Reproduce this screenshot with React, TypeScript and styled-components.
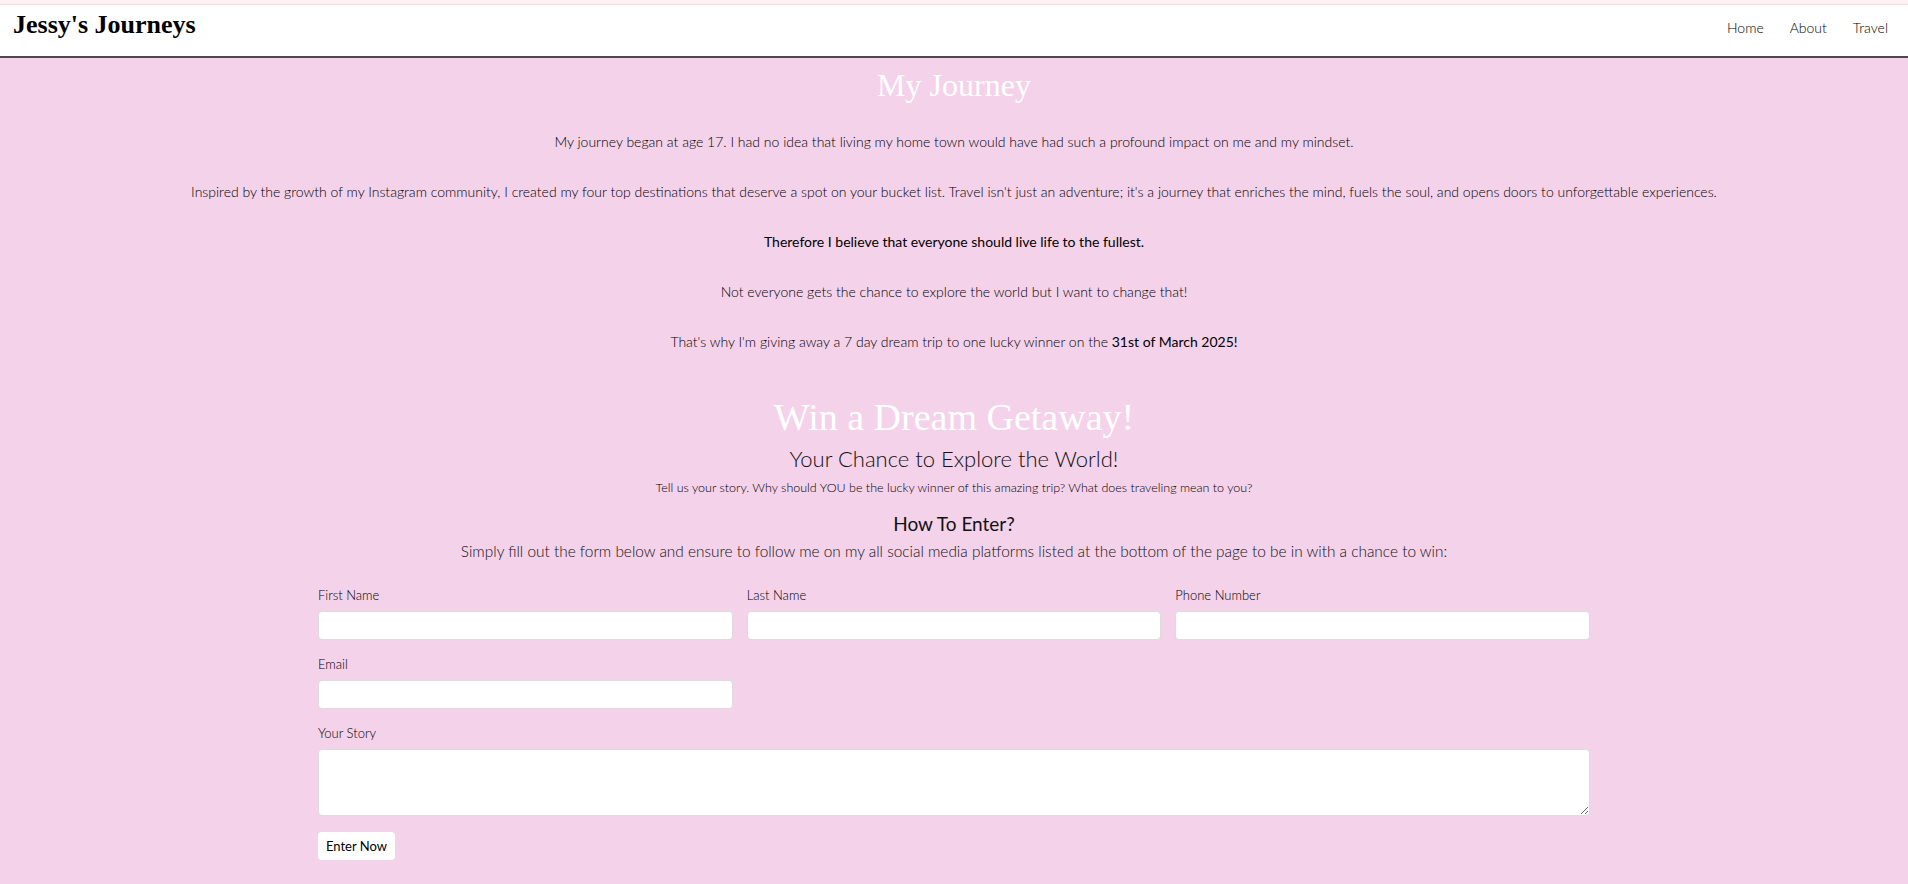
import React from "react";
import styled, { createGlobalStyle } from "styled-components";

const GlobalStyle = createGlobalStyle`
  html, body { margin: 0; padding: 0; scrollbar-width: none; }
  html::-webkit-scrollbar, body::-webkit-scrollbar { display: none; }
  body {
    background: #f4d2ea;
    font-family: Lato, "Open Sans", Arial, sans-serif;
    color: #000;
  }
  * { box-sizing: border-box; }
`;

const TopStrip = styled.div`
  height: 5px;
  background: #fdf1f1;
  border-bottom: 1px solid #f6dede;
`;

const Header = styled.header`
  display: flex;
  align-items: baseline;
  justify-content: space-between;
  height: 53px;
  padding: 5px 20px 0 13px;
  background: #fff;
  border-bottom: 2px solid #4a4a4a;
`;

const Logo = styled.div`
  font-family: "Liberation Serif", "Times New Roman", serif;
  font-weight: 700;
  font-size: 26px;
  color: #000;
`;

const Nav = styled.nav`
  display: flex;
  gap: 26px;
`;

const NavLink = styled.a`
  font-size: 14px;
  font-weight: 300;
  color: #000;
  text-decoration: none;
`;

const Main = styled.main`
  display: flex;
  flex-direction: column;
  align-items: center;
  text-align: center;
  padding-bottom: 60px;
`;

const Title = styled.h1<{ $size: number; $top: number }>`
  margin: ${(p) => p.$top}px 0 0;
  font-family: "Liberation Serif", "Times New Roman", serif;
  font-weight: 400;
  font-size: ${(p) => p.$size}px;
  line-height: ${(p) => Math.round(p.$size * 1.16)}px;
  color: #fff;
`;

const Story = styled.section`
  display: flex;
  flex-direction: column;
  gap: 30px;
  margin-top: 28px;
`;

const Para = styled.p<{ $strong?: boolean }>`
  margin: 0;
  font-size: 14px;
  line-height: 20px;
  font-weight: ${(p) => (p.$strong ? 400 : 300)};
  color: #000;
`;

const Em = styled.span`
  font-weight: 400;
  color: #000;
`;

const Subtitle = styled.h2`
  margin: 6px 0 0;
  font-size: 22px;
  line-height: 28px;
  font-weight: 300;
  color: #111;
`;

const Small = styled.p`
  margin: 6px 0 0;
  font-size: 12.5px;
  line-height: 18px;
  font-weight: 300;
  color: #000;
`;

const HowTo = styled.h3`
  margin: 15px 0 0;
  font-size: 19px;
  line-height: 24px;
  font-weight: 400;
  color: #111;
`;

const Lead = styled.p`
  margin: 5px 0 0;
  font-size: 15.4px;
  line-height: 20px;
  font-weight: 300;
  color: #111;
`;

const Form = styled.form`
  display: grid;
  grid-template-columns: repeat(3, 1fr);
  column-gap: 14px;
  row-gap: 16px;
  width: 1272px;
  margin-top: 26px;
  text-align: left;
`;

const Field = styled.label<{ $full?: boolean }>`
  display: flex;
  flex-direction: column;
  gap: 7px;
  grid-column: ${(p) => (p.$full ? "1 / -1" : "auto")};
`;

const LabelText = styled.span`
  font-size: 13px;
  line-height: 17px;
  font-weight: 300;
  color: #000;
`;

const Input = styled.input`
  height: 29px;
  border: 1px solid #dcdcdc;
  border-radius: 4px;
  background: #fff;
  font-family: inherit;
`;

const TextArea = styled.textarea`
  height: 67px;
  border: 1px solid #dcdcdc;
  border-radius: 4px;
  background: #fff;
  font-family: inherit;
  resize: vertical;
`;

const ButtonRow = styled.div`
  grid-column: 1 / -1;
`;

const Button = styled.button`
  height: 28px;
  padding: 0 8px;
  border: none;
  border-radius: 4px;
  background: #fff;
  font-family: Lato, Arial, sans-serif;
  font-size: 13px;
  font-weight: 400;
  color: #000;
`;

export default function App() {
  return (
    <>
      <GlobalStyle />
      <TopStrip />
      <Header>
        <Logo>Jessy's Journeys</Logo>
        <Nav>
          <NavLink href="#">Home</NavLink>
          <NavLink href="#">About</NavLink>
          <NavLink href="#">Travel</NavLink>
        </Nav>
      </Header>
      <Main>
        <Title $size={32} $top={9}>My Journey</Title>
        <Story>
          <Para>
            My journey began at age 17. I had no idea that living my home town would have had such a profound impact on me and my mindset.
          </Para>
          <Para>
            Inspired by the growth of my Instagram community, I created my four top destinations that deserve a spot on your bucket list. Travel isn't just an adventure; it's a journey that enriches the mind, fuels the soul, and opens doors to unforgettable experiences.
          </Para>
          <Para $strong>Therefore I believe that everyone should live life to the fullest.</Para>
          <Para>Not everyone gets the chance to explore the world but I want to change that!</Para>
          <Para>
            That's why I'm giving away a 7 day dream trip to one lucky winner on the <Em>31st of March 2025!</Em>
          </Para>
        </Story>
        <Title $size={38} $top={43}>Win a Dream Getaway!</Title>
        <Subtitle>Your Chance to Explore the World!</Subtitle>
        <Small>Tell us your story. Why should YOU be the lucky winner of this amazing trip? What does traveling mean to you?</Small>
        <HowTo>How To Enter?</HowTo>
        <Lead>
          Simply fill out the form below and ensure to follow me on my all social media platforms listed at the bottom of the page to be in with a chance to win:
        </Lead>
        <Form onSubmit={(e) => e.preventDefault()}>
          <Field>
            <LabelText>First Name</LabelText>
            <Input type="text" />
          </Field>
          <Field>
            <LabelText>Last Name</LabelText>
            <Input type="text" />
          </Field>
          <Field>
            <LabelText>Phone Number</LabelText>
            <Input type="tel" />
          </Field>
          <Field>
            <LabelText>Email</LabelText>
            <Input type="email" />
          </Field>
          <Field $full>
            <LabelText>Your Story</LabelText>
            <TextArea />
          </Field>
          <ButtonRow>
            <Button type="submit">Enter Now</Button>
          </ButtonRow>
        </Form>
      </Main>
    </>
  );
}
